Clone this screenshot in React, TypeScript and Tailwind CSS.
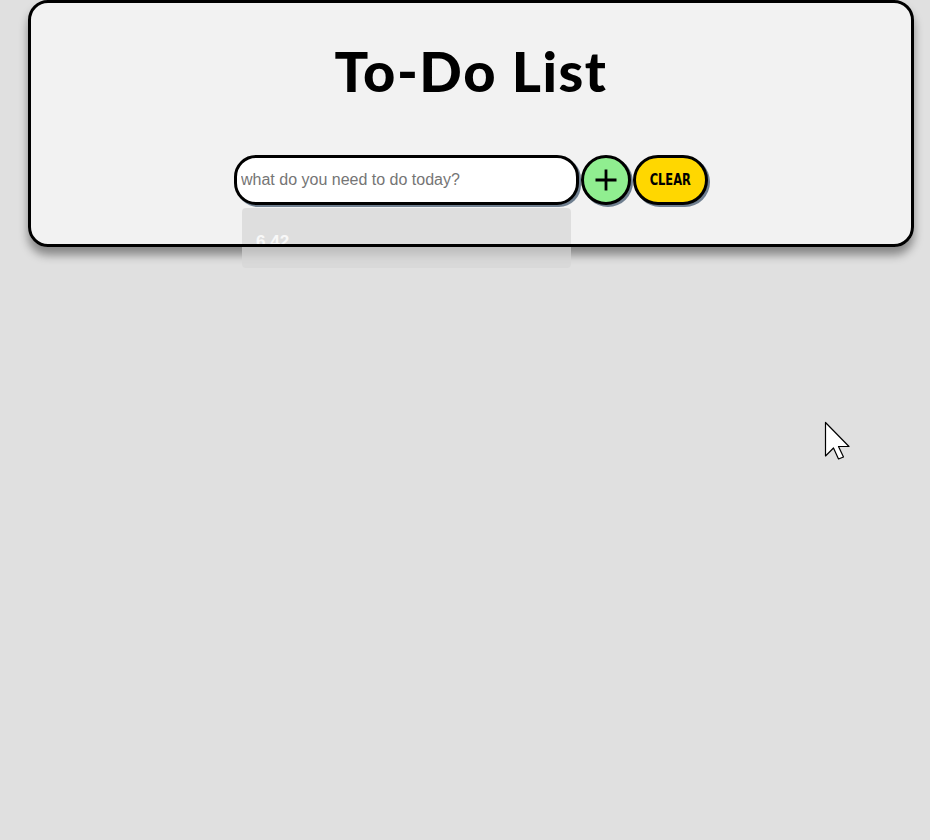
import React from "react";

export default function App() {
  return (
    <div className="relative min-h-[840px] w-full overflow-hidden bg-[#e0e0e0] font-['Liberation_Sans',Arial,sans-serif]">
      <div className="relative ml-[28px] h-[247px] w-[886px] rounded-[20px] bg-[#f2f2f2] shadow-[0_8px_10px_rgba(0,0,0,0.4)]">
        <h1 className="pt-[36px] text-center font-['Lato',sans-serif] text-[56px] font-black leading-[70px] tracking-[1.5px] text-black">
          To-Do List
        </h1>
        <div className="mt-[49px] flex justify-center gap-[2px]">
          <div className="relative">
            <input
              className="h-[50px] w-[345px] rounded-[22px] border-3 border-black bg-white px-[4px] text-[16px] text-black shadow-[2px_2px_0_#6f7f90] outline-none placeholder:text-[#757575]"
              placeholder="what do you need to do today?"
            />
            <div className="absolute left-[8px] top-[53px] h-[60px] w-[329px] rounded-[4px] bg-[#d6d6d6]/70 px-[14px] pt-[21px] text-[17px] font-bold text-white/80">
              6 42
            </div>
          </div>
          <button className="flex h-[50px] w-[50px] items-center justify-center rounded-full border-3 border-black bg-[#90ee90] text-black shadow-[2px_2px_0_#6f7f90]">
            <svg width="24" height="24" viewBox="0 0 24 24">
              <path d="M12 1.5 V22.5 M1.5 12 H22.5" stroke="#000" strokeWidth="2.8" />
            </svg>
          </button>
          <button className="flex h-[50px] w-[75px] items-center justify-center rounded-full border-3 border-black bg-[#ffd700] font-['DejaVu_Sans_Condensed','DejaVu_Sans',sans-serif] text-[15px] font-black text-black shadow-[2px_2px_0_#6f7f90]">
            <span className="inline-block scale-x-[0.85] scale-y-[1.08]">CLEAR</span>
          </button>
        </div>
        {/* border sits above the overflowing suggestion box */}
        <div className="pointer-events-none absolute inset-0 rounded-[20px] border-3 border-black" />
      </div>
      <svg
        className="absolute left-[824px] top-[421px]"
        width="28"
        height="40"
        viewBox="0 0 28 40"
      >
        <path
          d="M1.5 1.5 L1.5 35 L9.5 27 L14.5 38 L19.5 36 L14.5 25.5 L25 25.5 Z"
          fill="#fff"
          stroke="#000"
          strokeWidth="1.2"
          strokeLinejoin="round"
        />
      </svg>
    </div>
  );
}
